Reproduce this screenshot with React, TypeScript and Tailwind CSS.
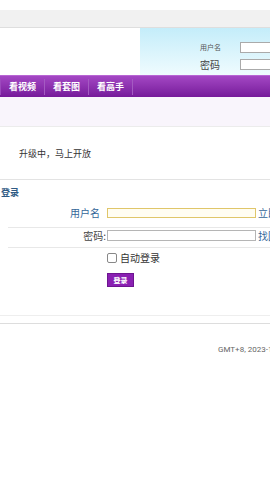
import React from 'react';

const navItems = ['看视频', '看套图', '看高手'];

export default function App() {
    return (
        <div
            className="w-[270px] h-[480px] overflow-hidden bg-white text-[#333]"
            style={{ fontFamily: '"Noto Sans CJK SC", "Liberation Sans", sans-serif' }}
        >
            <div className="h-[10px]" />
            <div className="h-[18px] bg-[#f1f1f1] border-b border-[#dedede]" />

            {/* header with quick login */}
            <div className="h-[47px] flex">
                <div className="w-[140px] shrink-0" />
                <div className="w-[130px] shrink-0 overflow-hidden bg-gradient-to-b from-[#c4edfa] to-[#effbfe] flex flex-col pt-[14px] pl-[60px] gap-[6px]">
                    <div className="flex items-center h-[11px]">
                        <span className="w-[40px] shrink-0 text-[7px] leading-none text-[#555]">用户名</span>
                        <div className="w-[40px] shrink-0 h-[11px] bg-white border border-[#aaa]" />
                    </div>
                    <div className="flex items-center h-[11px]">
                        <span className="w-[40px] shrink-0 text-[10px] leading-none text-[#444]">密码</span>
                        <div className="w-[40px] shrink-0 h-[11px] bg-white border border-[#aaa]" />
                    </div>
                </div>
            </div>

            {/* purple nav */}
            <div className="h-[22px] flex items-center bg-gradient-to-b from-[#a447c4] to-[#76199a] border-t border-[#b865d4]">
                <div className="w-px h-[16px] bg-[#9c49bd]" />
                {navItems.map((n, i) => (
                    <React.Fragment key={i}>
                        <a className="px-[8px] text-[9px] font-bold text-white leading-none">{n}</a>
                        <div className="w-px h-[16px] bg-[#a45ac2]" />
                    </React.Fragment>
                ))}
            </div>
            <div className="h-[30px] bg-[#f9f5fc] border-b border-[#ececec]" />

            <div className="h-[53px] flex items-center pl-[19px] border-b border-[#e3e3e3]">
                <p className="text-[9px] leading-none">升级中，马上开放</p>
            </div>

            {/* login form */}
            <div className="w-[300px]">
                <h3 className="text-[9px] font-bold text-[#2f5a84] leading-none pt-[8px] pl-[1px]">登录</h3>
                <div className="ml-[8px] mt-[2px] flex items-center h-[29px] border-b border-[#e8e8e8]">
                    <label className="w-[92px] text-right text-[10px] text-[#336699] leading-none">用户名</label>
                    <div className="ml-[7px] w-[149px] h-[10px] border border-[#e0c66a] bg-[#fffdf2]" />
                    <a className="ml-[2px] text-[10px] text-[#336699] leading-none">立即注册</a>
                </div>
                <div className="ml-[8px] flex items-center h-[20px] pb-[4px] border-b border-[#e8e8e8]">
                    <label className="w-[98px] text-right text-[10px] text-[#444] leading-none">密码:</label>
                    <div className="ml-[1px] w-[149px] h-[11px] border border-[#b5b5b5] bg-white" />
                    <a className="ml-[2px] text-[10px] text-[#336699] leading-none">找回密码</a>
                </div>
                <div className="pl-[107px] mt-[5px] flex items-center h-[10px]">
                    <span className="w-[10px] h-[10px] border border-[#888] rounded-[2px] bg-white" />
                    <span className="ml-[3px] text-[10px] text-[#333] leading-none">自动登录</span>
                </div>
                <div className="pl-[107px] mt-[10px] flex">
                    <button className="w-[27px] h-[14px] bg-[#8a20b2] border border-[#6d1590] text-white text-[7px] font-bold leading-none">
                        登录
                    </button>
                </div>
            </div>

            <div className="mt-[28px] h-[9px] border-t border-[#eeeeee] border-b border-b-[#dddddd]" />

            <div
                className="mt-[22px] pl-[218px] whitespace-nowrap text-[8px] text-[#666] leading-none"
                style={{ fontFamily: 'Roboto, "Liberation Sans", sans-serif' }}
            >
                GMT+8, 2023-11-12 10:00
            </div>
        </div>
    );
}
